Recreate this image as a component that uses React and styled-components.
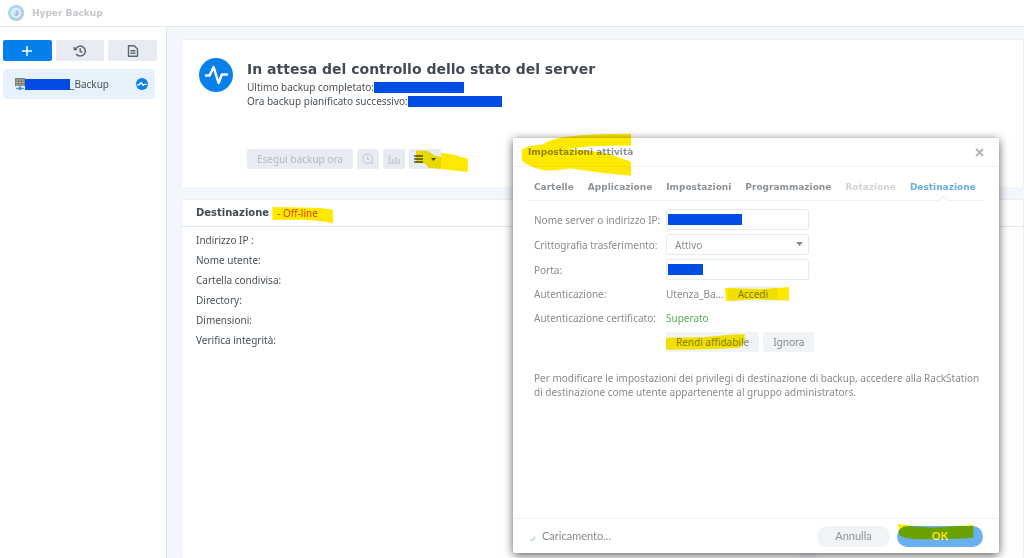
import React, { useState } from "react";
import styled, { createGlobalStyle } from "styled-components";

const GlobalStyle = createGlobalStyle`
    * {
        box-sizing: border-box;
    }

    body {
        margin: 0;
        background: #f3f6fa;
        font-family: "Noto Sans", "DejaVu Sans", sans-serif;
        font-size: 10px;
        line-height: 14px;
        color: #48525c;
    }

    button,
    input,
    select {
        font: inherit;
        color: inherit;
    }

    button {
        padding: 0;
        border: none;
        cursor: pointer;
    }

    h1,
    h2,
    p,
    dl,
    dt {
        margin: 0;
    }
`;

const Page = styled.div`
    min-height: 100vh;
    display: flex;
    flex-direction: column;
`;

const TitleBar = styled.header`
    height: 27px;
    padding: 0 8px;
    display: flex;
    align-items: center;
    gap: 8px;
    background: #fff;
    border-bottom: 1px solid #dfe6ee;
`;

const AppName = styled.h1`
    font-family: "DejaVu Sans", sans-serif;
    font-size: 9px;
    font-weight: bold;
    color: #c3c7cb;
`;

const Content = styled.div`
    flex: 1;
    display: flex;
`;

const Sidebar = styled.aside`
    width: 167px;
    flex-shrink: 0;
    padding: 13px 9px 0 3px;
    background: #fff;
    border-right: 1px solid #dfe6ee;
`;

const SideActions = styled.div`
    margin-bottom: 8px;
    display: grid;
    grid-template-columns: repeat(3, 1fr);
    gap: 4px;
`;

const SideButton = styled.button`
    height: 21px;
    display: flex;
    justify-content: center;
    align-items: center;
    border-radius: 2px;
    background: ${(props) => (props.$primary ? "#057feb" : "#e8ecf2")};
    color: ${(props) => (props.$primary ? "#fff" : "#5c6670")};
`;

const Task = styled.a`
    height: 30px;
    margin-right: 2px;
    padding: 0 7px 0 12px;
    display: flex;
    align-items: center;
    border-radius: 4px;
    background: #e6f1fc;
    color: #48525c;
    text-decoration: none;

    .status {
        margin-left: auto;
    }
`;

const Redacted = styled.span`
    display: inline-block;
    width: ${(props) => props.$width}px;
    height: 11px;
    flex-shrink: 0;
    background: #004de6;
`;

const Main = styled.main`
    flex: 1;
    padding: 12px 0 0 14px;
    display: flex;
    flex-direction: column;
    gap: 12px;
`;

const Card = styled.section`
    background: #fff;
    border: 1px solid #ebeff4;
    border-bottom: none;
    border-radius: 2px;
`;

const StatusCard = styled(Card)`
    height: 148px;
    padding: 18px 17px;
    display: flex;
    gap: 14px;
`;

const StatusInfo = styled.div`
    display: flex;
    flex-direction: column;
`;

const StatusTitle = styled.h2`
    margin: 1px 0;
    font-family: "DejaVu Sans", sans-serif;
    font-size: 14px;
    line-height: 20px;
    color: #414b55;
`;

const StatusLine = styled.p`
    display: flex;
    align-items: center;
    line-height: 14px;
`;

const Toolbar = styled.div`
    margin-top: auto;
    display: flex;
    gap: 4px;
`;

const ToolButton = styled.button`
    position: relative;
    height: 20px;
    min-width: 22px;
    padding: 0 ${(props) => (props.$wide ? 10 : 5)}px;
    display: flex;
    justify-content: center;
    align-items: center;
    gap: 8px;
    border-radius: 2px;
    background: #e8ecf2;
    color: #48525c;

    &:disabled {
        color: #b4bac2;
        cursor: default;
    }
`;

const Details = styled.div`
    flex: 1;
    display: grid;
    grid-template-columns: 620px 1fr;
    gap: 14px;
`;

const CardHeader = styled.div`
    height: 27px;
    padding: 0 14px;
    display: flex;
    align-items: center;
    gap: 8px;
    border-bottom: 1px solid #dfe5ec;
`;

const CardTitle = styled.h2`
    font-family: "DejaVu Sans", sans-serif;
    font-size: 10px;
    color: #414b55;
`;

const Offline = styled.span`
    position: relative;
    color: #e0483e;
`;

const InfoList = styled.dl`
    padding: 3px 14px;
    line-height: 20px;
`;

const Dialog = styled.section`
    position: fixed;
    top: 138px;
    right: 25px;
    bottom: 5px;
    width: 486px;
    display: flex;
    flex-direction: column;
    background: #fff;
    border-radius: 2px;
    box-shadow: 0 2px 10px rgba(0, 0, 0, 0.65);
    color: #868b91;
`;

const DialogHeader = styled.header`
    height: 29px;
    padding: 0 15px;
    display: flex;
    justify-content: space-between;
    align-items: center;
    border-bottom: 1px solid #eff1f3;

    button {
        display: flex;
        background: none;
        color: #b1b5b9;
    }
`;

const DialogTitle = styled.h2`
    position: relative;
    font-family: "DejaVu Sans", sans-serif;
    font-size: 9px;
    color: #8d9298;
`;

const DialogBody = styled.div`
    flex: 1;
    padding: 7px 15px 0;
`;

const Tabs = styled.nav`
    height: 27px;
    margin-bottom: 8px;
    padding: 0 6px;
    display: flex;
    align-items: center;
    gap: 14px;
    border-bottom: 1px solid #eff1f3;
`;

const Tab = styled.button`
    position: relative;
    height: 26px;
    background: none;
    font-family: "DejaVu Sans", sans-serif;
    font-size: 9px;
    font-weight: bold;
    color: ${(props) => (props.$active ? "#68ade8" : "#8d9298")};

    &:disabled {
        color: #d2d4d6;
    }

    &::after {
        content: "";
        display: ${(props) => (props.$active ? "block" : "none")};
        position: absolute;
        left: 50%;
        bottom: -4px;
        width: 6px;
        height: 6px;
        margin-left: -3px;
        background: #fff;
        border: 1px solid #e6e9ec;
        border-right: none;
        border-bottom: none;
        transform: rotate(45deg);
    }
`;

const Form = styled.form`
    padding: 0 6px;
    display: flex;
    flex-direction: column;
    gap: 4px;
`;

const Row = styled.div`
    min-height: 20px;
    display: grid;
    grid-template-columns: 132px 1fr;
    align-items: center;
    white-space: nowrap;
`;

const Field = styled.div`
    position: relative;
    width: 143px;
    height: 21px;

    input,
    select {
        width: 100%;
        height: 100%;
        padding: 0 8px;
        border: 1px solid #e6e9ed;
        border-radius: 2px;
        background: #fff;
        outline: none;
        appearance: none;
    }

    ${Redacted} {
        position: absolute;
        left: 2px;
        top: 5px;
    }

    svg {
        position: absolute;
        right: 6px;
        top: 8px;
        pointer-events: none;
    }
`;

const Inline = styled.div`
    display: flex;
    align-items: center;
    gap: 4px;
`;

const SmallButton = styled.button`
    position: relative;
    height: ${(props) => (props.$short ? 16 : 20)}px;
    padding: 0 10px;
    border-radius: 2px;
    background: #f1f4f7;
    color: #868b91;
`;

const Passed = styled.span`
    color: #55ae55;
`;

const Note = styled.p`
    margin-top: 19px;
    padding-left: 6px;
`;

const DialogFooter = styled.footer`
    height: 35px;
    padding: 0 16px;
    display: flex;
    align-items: center;
    gap: 7px;
    border-top: 1px solid #eff1f3;
    font-family: Lato, sans-serif;
    font-size: 11px;
`;

const Loading = styled.div`
    margin-right: auto;
    display: flex;
    align-items: center;
    gap: 5px;
`;

const PillButton = styled.button`
    position: relative;
    width: ${(props) => (props.$primary ? 86 : 73)}px;
    height: 21px;
    border-radius: 11px;
    background: ${(props) => (props.$primary ? "#69b0f0" : "#f1f4f7")};
    color: ${(props) => (props.$primary ? "#fff" : "#8d9298")};
    font-weight: ${(props) => (props.$primary ? "bold" : "normal")};
`;

const MarkerSvg = styled.svg`
    position: absolute;
    left: ${(props) => props.$left}px;
    top: ${(props) => props.$top}px;
    mix-blend-mode: multiply;
    pointer-events: none;
`;

// highlighter stroke, drawn three units to the pixel
function Marker({ left, top, box, d }) {
    const [, , w, h] = box.split(" ").map(Number);
    return (
        <MarkerSvg
            $left={left}
            $top={top}
            width={w / 3}
            height={h / 3}
            viewBox={box}
            aria-hidden="true"
        >
            <path d={d} fill="#ffe900" />
        </MarkerSvg>
    );
}

function AppLogo() {
    return (
        <svg width="16" height="16" viewBox="0 0 16 16">
            <circle cx="8" cy="8" r="8" fill="#a9d8e8" />
            <path d="M8 0a8 8 0 0 1 0 16z" fill="#b5cdf0" />
            <circle cx="8" cy="8" r="5" fill="#e4f3f8" />
            <circle cx="8" cy="8" r="3" fill="#a5c3ea" />
            <path d="M8 8V4.5A3.5 3.5 0 0 0 5 10z" fill="#d3e8f5" />
        </svg>
    );
}

function HistoryIcon() {
    return (
        <svg width="14" height="12" viewBox="0 0 14 12" fill="none" stroke="currentColor" strokeWidth="1.5">
            <path d="M2.6 4.3A5 5 0 1 1 3.2 9" />
            <path d="M7.2 3.3v3.1l2.2 1" />
            <path d="M.6 1.2v4.1h4.1z" fill="currentColor" stroke="none" />
        </svg>
    );
}

function LogIcon() {
    return (
        <svg width="12" height="12" viewBox="0 0 12 12" fill="none" stroke="currentColor" strokeWidth="1.4">
            <path d="M1.5.8h5.7l3.3 3.3v7.1h-9z" strokeLinejoin="round" />
            <path d="M3.5 5.8h5M3.5 8.3h5" />
        </svg>
    );
}

function ServerIcon() {
    return (
        <svg width="10" height="12" viewBox="0 0 10 12">
            <path d="M0 0h10v8H0z" fill="#7d8076" />
            <path d="M1 2h8M1 4.5h8M1 7h8" stroke="#c2bd91" strokeDasharray="2 1" />
            <path d="M5 8v2M1 10.5h8" stroke="#5b9fd4" strokeWidth="1.5" />
            <circle cx="5" cy="10.5" r="1.5" fill="#2f8fe0" />
        </svg>
    );
}

function PulseIcon() {
    return (
        <svg width="34" height="34" viewBox="0 0 34 34">
            <circle cx="17" cy="17" r="17" fill="#0a80ec" />
            <path
                d="M7 17.5h3.6l4-8.5 5 16 3.2-8.5H28"
                fill="none"
                stroke="#fff"
                strokeWidth="2.4"
                strokeLinejoin="round"
                strokeLinecap="round"
            />
        </svg>
    );
}

function TaskStatusIcon() {
    return (
        <svg className="status" width="12" height="12" viewBox="0 0 12 12">
            <circle cx="6" cy="6" r="6" fill="#0a80ec" />
            <path d="M1.2 6.8h1.9L5 4.6l2.2 2.6 1.2-.8h2.4" fill="none" stroke="#fff" strokeWidth="1.4" />
        </svg>
    );
}

function Caret() {
    return (
        <svg width="7" height="4" viewBox="0 0 7 4">
            <path d="M0 0h7L3.5 4z" fill="currentColor" />
        </svg>
    );
}

const infoLabels = [
    "Indirizzo IP :",
    "Nome utente:",
    "Cartella condivisa:",
    "Directory:",
    "Dimensioni:",
    "Verifica integrità:",
];

const tabs = [
    "Cartelle",
    "Applicazione",
    "Impostazioni",
    "Programmazione",
    "Rotazione",
    "Destinazione",
];

function SettingsDialog() {
    const [activeTab, setActiveTab] = useState("Destinazione");

    return (
        <Dialog role="dialog" aria-labelledby="dialog-title">
            <DialogHeader>
                <DialogTitle id="dialog-title">
                    Impostazioni attività
                    <Marker
                        left={-8}
                        top={-12}
                        box="30 12 336 132"
                        d="M35 64Q42 51 100 46Q112 34 150 26Q220 14 363 14V50Q250 48 172 60Q240 63 300 76L363 98V140Q290 136 180 118Q150 125 100 124Q58 114 36 96Z"
                    />
                </DialogTitle>
                <button type="button" aria-label="Chiudi">
                    <svg width="9" height="9" viewBox="0 0 9 9" stroke="currentColor" strokeWidth="1.8">
                        <path d="M1 1l7 7M8 1L1 8" />
                    </svg>
                </button>
            </DialogHeader>

            <DialogBody>
                <Tabs>
                    {tabs.map((tab) => (
                        <Tab
                            key={tab}
                            type="button"
                            $active={tab === activeTab}
                            disabled={tab === "Rotazione"}
                            onClick={() => setActiveTab(tab)}
                        >
                            {tab}
                        </Tab>
                    ))}
                </Tabs>

                <Form onSubmit={(event) => event.preventDefault()}>
                    <Row>
                        <label htmlFor="server">Nome server o indirizzo IP:</label>
                        <Field>
                            <input id="server" type="text" />
                            <Redacted $width={74} />
                        </Field>
                    </Row>
                    <Row>
                        <label htmlFor="encryption">Crittografia trasferimento:</label>
                        <Field>
                            <select id="encryption" defaultValue="on">
                                <option value="on">Attivo</option>
                                <option value="off">Disattivo</option>
                            </select>
                            <Caret />
                        </Field>
                    </Row>
                    <Row>
                        <label htmlFor="port">Porta:</label>
                        <Field>
                            <input id="port" type="text" />
                            <Redacted $width={35} />
                        </Field>
                    </Row>
                    <Row>
                        <span>Autenticazione:</span>
                        <Inline>
                            <span>Utenza_Ba...</span>
                            <SmallButton type="button" $short>
                                Accedi
                                <Marker
                                    left={-4}
                                    top={0}
                                    box="642 159 198 48"
                                    d="M645 165L760 168 837 162V203L740 199 648 204Z"
                                />
                            </SmallButton>
                        </Inline>
                    </Row>
                    <Row>
                        <span>Autenticazione certificato:</span>
                        <Passed>Superato</Passed>
                    </Row>
                    <Row>
                        <span />
                        <Inline>
                            <SmallButton type="button">
                                Rendi affidabile
                                <Marker
                                    left={-1}
                                    top={1}
                                    box="465 303 240 54"
                                    d="M468 317L580 316 660 308 704 306V330L690 347 600 352 468 353Z"
                                />
                            </SmallButton>
                            <SmallButton type="button">Ignora</SmallButton>
                        </Inline>
                    </Row>
                </Form>

                <Note>
                    Per modificare le impostazioni dei privilegi di destinazione di
                    backup, accedere alla RackStation di destinazione come utente
                    appartenente al gruppo administrators.
                </Note>
            </DialogBody>

            <DialogFooter>
                <Loading>
                    <svg width="8" height="12" viewBox="0 0 8 12" fill="none">
                        <path d="M1 10.5Q5 10.5 6 6.5" stroke="#bcd9ee" strokeWidth="1.6" />
                    </svg>
                    Caricamento...
                </Loading>
                <PillButton type="button">Annulla</PillButton>
                <PillButton type="button" $primary>
                    OK
                    <Marker
                        left={0}
                        top={-3}
                        box="321 66 231 51"
                        d="M324 69L345 71Q390 81 450 79L550 72V110Q450 117 370 114 335 110 328 102Z"
                    />
                </PillButton>
            </DialogFooter>
        </Dialog>
    );
}

function App() {
    return (
        <Page>
            <GlobalStyle />
            <TitleBar>
                <AppLogo />
                <AppName>Hyper Backup</AppName>
            </TitleBar>

            <Content>
                <Sidebar>
                    <SideActions>
                        <SideButton type="button" $primary aria-label="Crea">
                            <svg width="10" height="10" viewBox="0 0 10 10" stroke="currentColor" strokeWidth="1.5">
                                <path d="M5 0v10M0 5h10" />
                            </svg>
                        </SideButton>
                        <SideButton type="button" aria-label="Ripristina">
                            <HistoryIcon />
                        </SideButton>
                        <SideButton type="button" aria-label="Registro">
                            <LogIcon />
                        </SideButton>
                    </SideActions>
                    <Task href="#task">
                        <ServerIcon />
                        <Redacted $width={45} />
                        _Backup
                        <TaskStatusIcon />
                    </Task>
                </Sidebar>

                <Main>
                    <StatusCard>
                        <PulseIcon />
                        <StatusInfo>
                            <StatusTitle>
                                In attesa del controllo dello stato del server
                            </StatusTitle>
                            <StatusLine>
                                Ultimo backup completato:
                                <Redacted $width={90} />
                            </StatusLine>
                            <StatusLine>
                                Ora backup pianificato successivo:
                                <Redacted $width={94} />
                            </StatusLine>
                            <Toolbar>
                                <ToolButton type="button" $wide disabled>
                                    Esegui backup ora
                                </ToolButton>
                                <ToolButton type="button" disabled aria-label="Versioni">
                                    <svg width="12" height="12" viewBox="0 0 12 12" fill="none" stroke="#ccd1d8" strokeWidth="1.4">
                                        <circle cx="5.8" cy="5.8" r="4.8" />
                                        <path d="M5.6 3v3.2h2.2M8.6 8.6l2.6 2.6" />
                                    </svg>
                                </ToolButton>
                                <ToolButton type="button" disabled aria-label="Statistiche">
                                    <svg width="12" height="10" viewBox="0 0 12 10" stroke="#ccd1d8" strokeWidth="2">
                                        <path d="M1.5 1v8M4.7 5v4M7.9 3v6M11 5v4" />
                                        <path d="M0 9.5h12" strokeWidth="1" />
                                    </svg>
                                </ToolButton>
                                <ToolButton type="button" aria-label="Menu">
                                    <svg width="9" height="8" viewBox="0 0 9 8" stroke="currentColor" strokeWidth="1.6">
                                        <path d="M0 1h9M0 4h9M0 7h9" />
                                    </svg>
                                    <svg width="5" height="3" viewBox="0 0 5 3">
                                        <path d="M0 0h5L2.5 3z" fill="currentColor" />
                                    </svg>
                                    <Marker
                                        left={6}
                                        top={0}
                                        box="705 342 162 72"
                                        d="M708 347H738Q750 348 755 356L768 363 783 366V353L825 360 864 372V411L783 402 745 398 735 385 708 383Z"
                                    />
                                </ToolButton>
                            </Toolbar>
                        </StatusInfo>
                    </StatusCard>

                    <Details>
                        <Card>
                            <CardHeader>
                                <CardTitle>Destinazione</CardTitle>
                                <Offline>
                                    - Off-line
                                    <Marker
                                        left={-5}
                                        top={0}
                                        box="276 45 186 54"
                                        d="M277 48L400 50Q430 50 459 56V97Q420 87 350 86L277 87Z"
                                    />
                                </Offline>
                            </CardHeader>
                            <InfoList>
                                {infoLabels.map((label) => (
                                    <dt key={label}>{label}</dt>
                                ))}
                            </InfoList>
                        </Card>
                        <Card>
                            <CardHeader />
                        </Card>
                    </Details>
                </Main>
            </Content>

            <SettingsDialog />
        </Page>
    );
}

export default App;
